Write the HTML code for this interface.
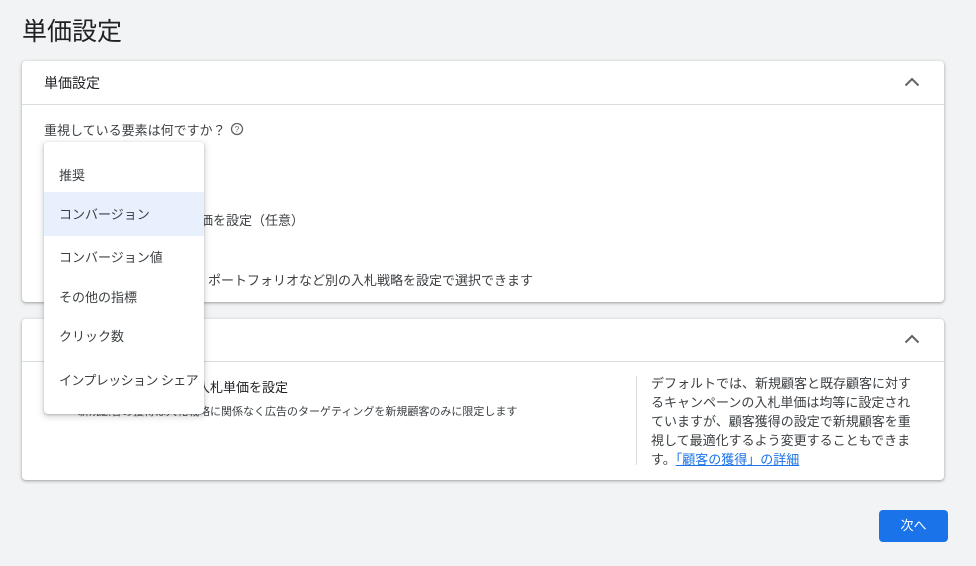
<!DOCTYPE html><html><head><meta charset="utf-8"><style>
body{margin:0;width:976px;height:566px;background:#f1f3f4;font-family:"Liberation Sans","Noto Sans CJK JP",sans-serif;color:#3c4043;position:relative;overflow:hidden}
.a{position:absolute;white-space:nowrap}
.card{position:absolute;left:22px;width:922px;background:#fff;border-radius:4px;box-shadow:0 1px 2px rgba(60,64,67,.3),0 1px 3px 1px rgba(60,64,67,.15)}
.hr{position:absolute;left:0;right:0;height:1px;background:#dadce0}
.chev{position:absolute;right:24px;width:16px;height:10px}
.menu{position:absolute;left:44px;top:142px;width:160px;height:272px;background:#fff;border-radius:4px;box-shadow:0 2px 6px 2px rgba(60,64,67,.15),0 1px 2px rgba(60,64,67,.3)}
.mi{position:absolute;left:15px;font-size:13px;color:#3c4043;white-space:nowrap}
</style></head><body>
<div class="a" style="left:22px;top:12px;font-size:25px;color:#202124">単価設定</div>
<div class="card" style="top:61px;height:241px">
<div class="a" style="left:22px;top:12px;font-size:14px;color:#202124">単価設定</div>
<svg class="chev" style="top:16px" viewBox="0 0 16 10"><path d="M1.5 8.5L8 2l6.5 6.5" fill="none" stroke="#5f6368" stroke-width="2"/></svg>
<div class="hr" style="top:43px"></div>
<div class="a" style="left:22px;top:59px;font-size:13px">重視している要素は何ですか？</div>
<svg class="a" style="left:208px;top:61px" width="14" height="14" viewBox="0 0 14 14"><circle cx="7" cy="7" r="5.5" fill="none" stroke="#5f6368" stroke-width="1.3"/><text x="7" y="10" font-size="8" text-anchor="middle" fill="#5f6368" font-family="Liberation Sans">?</text></svg>
<div class="a" style="left:165px;top:149px;font-size:13px">単価を設定（任意）</div>
<div class="a" style="left:186px;top:209px;font-size:13px">ポートフォリオなど別の入札戦略を設定で選択できます</div>
</div>
<div class="card" style="top:319px;height:161px">
<svg class="chev" style="top:15px" viewBox="0 0 16 10"><path d="M1.5 8.5L8 2l6.5 6.5" fill="none" stroke="#5f6368" stroke-width="2"/></svg>
<div class="hr" style="top:42px"></div>
<div class="a" style="left:136px;top:58px;font-size:13px;color:#202124">顧客の入札単価を設定</div>
<div class="a" style="left:56px;top:84px;font-size:11px">新規顧客の獲得は入札戦略に関係なく広告のターゲティングを新規顧客のみに限定します</div>
<div class="a" style="left:614px;top:57px;width:1px;height:89px;background:#dadce0"></div>
<div class="a" style="left:629px;top:55px;width:262px;white-space:normal;font-size:13px;line-height:19px">デフォルトでは、新規顧客と既存顧客に対するキャンペーンの入札単価は均等に設定されていますが、顧客獲得の設定で新規顧客を重視して最適化するよう変更することもできます。<span style="color:#1a73e8;text-decoration:underline">「顧客の獲得」の詳細</span></div>
</div>
<div class="menu">
<div class="mi" style="top:23px">推奨</div>
<div class="a" style="left:0;top:50px;width:160px;height:44px;background:#e8f0fe"></div>
<div class="mi" style="top:62px">コンバージョン</div>
<div class="mi" style="top:105px">コンバージョン値</div>
<div class="mi" style="top:145px">その他の指標</div>
<div class="mi" style="top:184px">クリック数</div>
<div class="mi" style="top:228px;letter-spacing:-0.6px">インプレッション シェア</div>
</div>
<div class="a" style="left:879px;top:510px;width:69px;height:32px;background:#1a73e8;border-radius:4px;color:#fff;font-size:13px;text-align:center;line-height:32px">次へ</div>
</body></html>
